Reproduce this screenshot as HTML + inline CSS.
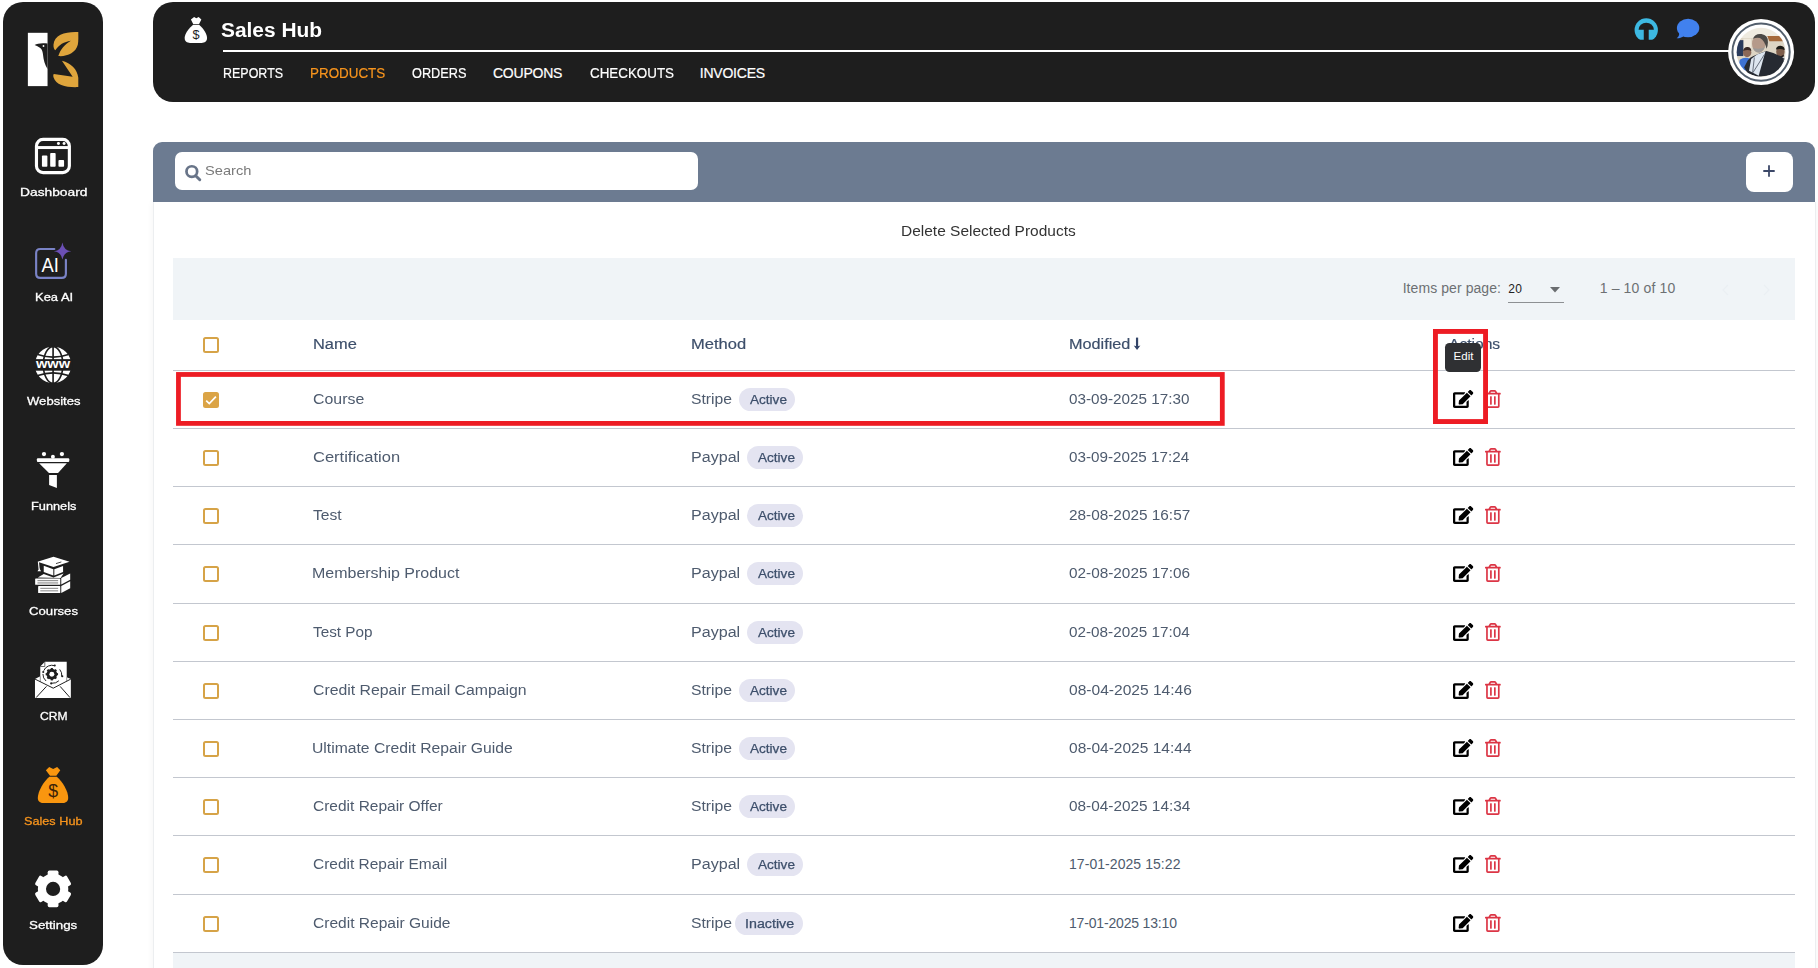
<!DOCTYPE html>
<html lang="en"><head><meta charset="utf-8"><title>Sales Hub - Products</title>
<style>
*{box-sizing:border-box;margin:0;padding:0}
html,body{width:1818px;height:968px;overflow:hidden;background:#fff;font-family:"Liberation Sans",sans-serif}
.abs{position:absolute}
.t{position:absolute;line-height:20px;white-space:nowrap;transform-origin:0 50%}
#side{position:absolute;left:3px;top:2px;width:100px;height:963px;background:#1e1e1e;border-radius:20px}
#head{position:absolute;left:153px;top:2px;width:1662px;height:99.7px;background:#1e1e1e;border-radius:20px}
#hline{position:absolute;left:223px;top:49.6px;width:1510px;height:2.4px;background:#fff}
#tool{position:absolute;left:153px;top:142px;width:1662px;height:60px;background:#6c7b91;border-radius:9px 9px 0 0}
#search{position:absolute;left:175px;top:151.6px;width:523px;height:38.4px;background:#fff;border-radius:7px}
#plus{position:absolute;left:1746px;top:152px;width:47.2px;height:40.2px;background:#fff;border-radius:8px}
#card{position:absolute;left:152.5px;top:202px;width:1663px;height:780px;border-left:1px solid #eceef0;border-right:1px solid #eceef0;background:#fff;box-shadow:0 0 7px rgba(0,0,0,0.05)}
#pag{position:absolute;left:173.2px;top:257.8px;width:1621.8px;height:61.8px;background:#f0f4f7}
#foot{position:absolute;left:173.2px;top:953px;width:1621.8px;height:20px;background:#f0f4f7}
.rl{position:absolute;left:173.2px;width:1621.8px;height:1px;background:#c3c7cf}
.cb{position:absolute;left:203px;width:16px;height:16px;border:2px solid #d6a347;border-radius:2.5px;background:#fff}
.cb.on{background:#dba446;border-color:#dba446}
.cb svg{position:absolute;left:-2px;top:-2px}
.bd{position:absolute;height:22.6px;border-radius:12px;background:#e4e4f1;color:#374151;font-size:12px;line-height:22.6px;text-align:center;white-space:nowrap;-webkit-text-stroke:0.25px #374151}
.ic{position:absolute;overflow:visible}
#tip{z-index:5;position:absolute;left:1445.2px;top:342.6px;width:35.6px;height:29.2px;background:#2f3033;border-radius:4.5px}
.sico{position:absolute;left:13px;width:80px;height:80px;overflow:visible}
</style></head><body>
<svg width="0" height="0" style="position:absolute"><defs>
<path id="i-edit" d="M402.6 83.2l90.200 90.200c3.800 3.800 3.800 10 0 13.800L274.400 405.600l-92.800 10.300c-12.400 1.400-22.900-9.100-21.500-21.500l10.300-92.800L388.800 83.200c3.800-3.800 10-3.800 13.800 0zm162-22.900l-48.800-48.800c-15.200-15.200-39.900-15.200-55.200 0l-35.400 35.400c-3.800 3.800-3.800 10 0 13.800l90.200 90.200c3.800 3.800 10 3.800 13.800 0l35.400-35.400c15.200-15.300 15.200-40 0-55.200zM384 346.200V448H64V128h229.800c3.200 0 6.200-1.300 8.500-3.500l40-40c7.600-7.600 2.200-20.500-8.500-20.500H48C21.500 64 0 85.500 0 112v352c0 26.500 21.500 48 48 48h352c26.500 0 48-21.500 48-48V306.200c0-10.700-12.900-16-20.500-8.500l-40 40c-2.200 2.300-3.500 5.300-3.500 8.500z" fill="#000"/>
<path id="i-trash" d="M268 416h24a12 12 0 0 0 12-12V188a12 12 0 0 0-12-12h-24a12 12 0 0 0-12 12v216a12 12 0 0 0 12 12zM432 80h-82.410l-34-56.700A48 48 0 0 0 274.410 0H173.590a48 48 0 0 0-41.160 23.300L98.410 80H16A16 16 0 0 0 0 96v16a16 16 0 0 0 16 16h16v336a48 48 0 0 0 48 48h288a48 48 0 0 0 48-48V128h16a16 16 0 0 0 16-16V96a16 16 0 0 0-16-16zM171.840 50.910A6 6 0 0 1 177 48h94a6 6 0 0 1 5.150 2.910L293.610 80H154.390zM368 464H80V128h288zm-212-48h24a12 12 0 0 0 12-12V188a12 12 0 0 0-12-12h-24a12 12 0 0 0-12 12v216a12 12 0 0 0 12 12z" fill="#dc3545"/>
</defs></svg>

<div id="side"></div>
<!-- logo -->
<svg class="sico" style="top:20px" viewBox="0 0 968 968">
  <rect x="180" y="155" width="238" height="645" fill="#fff"/>
  <path d="M262 303 C292 284 345 274 418 284 L418 592 C386 548 368 478 364 428 C361 386 352 356 330 338 C308 322 284 312 262 303 Z" fill="#1e1e1e"/>
  <circle cx="369" cy="315" r="11" fill="#fff"/>
  <path d="M790 145 C640 138 500 172 490 300 C488 335 498 356 512 366 C552 300 620 262 700 250 C625 298 575 352 548 436 C650 446 760 398 784 300 C794 250 790 200 790 145 Z" fill="#dfa53c"/>
  <path d="M790 812 C650 818 520 792 490 692 C485 672 487 662 494 654 L722 688 L592 494 C702 520 780 600 790 700 Z" fill="#dfa53c"/>
</svg>
<!-- dashboard -->
<svg class="sico" style="top:125px" viewBox="0 0 968 968">
  <rect x="284" y="174" width="398" height="402" rx="80" fill="none" stroke="#fff" stroke-width="38"/>
  <rect x="284" y="255" width="398" height="36" fill="#fff"/>
  <circle cx="550" cy="224" r="18" fill="#fff"/><circle cx="618" cy="224" r="18" fill="#fff"/>
  <rect x="350" y="370" width="66" height="136" rx="10" fill="#fff"/>
  <rect x="450" y="340" width="66" height="166" rx="10" fill="#fff"/>
  <rect x="550" y="425" width="68" height="81" rx="10" fill="#fff"/>
</svg>
<!-- kea ai -->
<svg class="sico" style="top:230px" viewBox="0 0 968 968">
  <path d="M500 230 H330 Q280 230 280 280 V530 Q280 580 330 580 H590 Q640 580 640 530 V360" fill="none" stroke="#7a83c6" stroke-width="26" stroke-linecap="round"/>
  <path d="M598 150 Q612 244 705 258 Q612 272 598 356 Q584 272 495 258 Q584 244 598 150 Z" fill="#6b4fb5"/>
  <text x="451" y="503" font-family="Liberation Sans, sans-serif" font-size="248" fill="#fff" text-anchor="middle" textLength="210" lengthAdjust="spacingAndGlyphs">AI</text>
</svg>
<!-- websites -->
<svg class="sico" style="top:335px" viewBox="0 0 968 968">
  <circle cx="485" cy="362" r="220" fill="#fff"/>
  <g fill="none" stroke="#1e1e1e" stroke-width="20">
    <line x1="485" y1="135" x2="485" y2="590"/>
    <ellipse cx="485" cy="362" rx="118" ry="222"/>
    <path d="M300 235 Q485 300 670 235"/>
    <path d="M300 490 Q485 425 670 490"/>
  </g>
  <rect x="255" y="292" width="460" height="140" fill="#1e1e1e"/>
  <text x="485" y="402" font-family="Liberation Sans, sans-serif" font-weight="700" font-size="158" fill="#fff" text-anchor="middle" textLength="414" lengthAdjust="spacingAndGlyphs">www</text>
</svg>
<!-- funnels -->
<svg class="sico" style="top:440px" viewBox="0 0 968 968">
  <circle cx="375" cy="170" r="26" fill="#fff"/><circle cx="483" cy="202" r="24" fill="#fff"/><circle cx="592" cy="170" r="26" fill="#fff"/>
  <rect x="289" y="222" width="392" height="44" rx="12" fill="#fff"/>
  <path d="M316 280 H652 L545 400 H435 Z" fill="#fff"/>
  <path d="M437 422 H531 V582 L437 546 Z" fill="#fff"/>
</svg>
<!-- courses -->
<svg class="sico" style="top:545px" viewBox="0 0 968 968">
  <path d="M296 203 L490 143 L684 203 L490 266 Z" fill="#fff"/>
  <path d="M372 252 L488 292 V368 L372 326 Z" fill="#fff"/>
  <path d="M500 292 L606 254 V326 L500 368 Z" fill="#fff"/>
  <path d="M520 225 L585 205" stroke="#1e1e1e" stroke-width="10"/>
  <path d="M308 205 L316 290" stroke="#fff" stroke-width="14"/>
  <path d="M318 280 L340 318 H296 Z" fill="#fff"/>
  <path d="M300 392 L372 352 L490 392 L612 345 L575 400 Z" fill="#fff"/>
  <rect x="268" y="404" width="304" height="78" rx="8" fill="#fff"/>
  <rect x="296" y="424" width="250" height="14" fill="#8f8f8f"/><rect x="296" y="452" width="250" height="14" fill="#8f8f8f"/>
  <path d="M584 400 L692 345 V420 L584 478 Z" fill="#fff"/>
  <rect x="304" y="496" width="268" height="86" rx="8" fill="#fff"/>
  <rect x="330" y="518" width="216" height="13" fill="#8f8f8f"/><rect x="330" y="548" width="216" height="13" fill="#8f8f8f"/>
  <path d="M584 496 L692 440 V522 L584 582 Z" fill="#fff"/>
</svg>
<!-- crm -->
<svg class="sico" style="top:650px" viewBox="0 0 968 968">
  <path d="M385 143 H650 V330 L700 352 V582 H266 V352 L330 318 V200 Z" fill="#fff"/>
  <path d="M330 200 H385 V143" fill="none" stroke="#1e1e1e" stroke-width="8"/>
  <path d="M266 352 L487 462 L700 352" fill="none" stroke="#1e1e1e" stroke-width="12"/>
  <path d="M280 576 L405 440 M690 576 L570 440" fill="none" stroke="#1e1e1e" stroke-width="12"/>
  <path d="M330 318 V385 M650 330 V378" fill="none" stroke="#1e1e1e" stroke-width="6"/>
  <circle cx="470" cy="293" r="48" fill="none" stroke="#1e1e1e" stroke-width="34"/>
  <g stroke="#1e1e1e" stroke-width="26" stroke-linecap="butt">
    <line x1="470" y1="218" x2="470" y2="368"/><line x1="395" y1="293" x2="545" y2="293"/>
    <line x1="417" y1="240" x2="523" y2="346"/><line x1="523" y1="240" x2="417" y2="346"/>
  </g>
  <circle cx="470" cy="293" r="30" fill="#fff"/>
  <path d="M372 250 A108 108 0 0 1 505 190 M565 235 A108 108 0 0 1 590 318 M555 372 A108 108 0 0 1 470 402 M400 375 A108 108 0 0 1 362 290" fill="none" stroke="#1e1e1e" stroke-width="12"/>
  <circle cx="505" cy="188" r="13" fill="#1e1e1e"/><circle cx="596" cy="318" r="13" fill="#1e1e1e"/><circle cx="462" cy="404" r="13" fill="#1e1e1e"/><circle cx="366" cy="266" r="13" fill="#1e1e1e"/>
</svg>
<!-- sales hub -->
<svg class="sico" style="top:755px" viewBox="0 0 968 968">
  <path d="M398 186 L438 146 L486 168 L534 146 L572 186 L524 252 H448 Z" fill="#f9960f"/>
  <path d="M440 262 H530 C600 320 670 440 668 520 C666 570 630 582 590 582 H380 C335 582 300 568 300 520 C300 440 370 320 440 262 Z" fill="#f9960f"/>
  <text x="485" y="505" font-family="Liberation Sans, sans-serif" font-size="215" fill="#3a2208" text-anchor="middle">$</text>
</svg>
<!-- settings -->
<svg class="sico" style="top:860px" viewBox="0 0 968 968">
  <g fill="#fff">
    <circle cx="485" cy="350" r="184"/>
    <g id="tooth"><rect x="420" y="128" width="130" height="90" rx="20"/></g>
    <use href="#tooth" transform="rotate(60 485 350)"/><use href="#tooth" transform="rotate(120 485 350)"/>
    <use href="#tooth" transform="rotate(180 485 350)"/><use href="#tooth" transform="rotate(240 485 350)"/><use href="#tooth" transform="rotate(300 485 350)"/>
  </g>
  <circle cx="485" cy="350" r="86" fill="#1e1e1e"/>
</svg>

<div id="head"></div>
<div id="hline"></div>
<!-- money bag header -->
<svg class="abs" style="left:150px;top:0" width="200" height="110" viewBox="0 0 1760 968">
  <path d="M360 172 L388 150 L408 160 L428 150 L452 172 L432 212 H380 Z" fill="#fff"/>
  <path d="M380 218 H432 C470 250 502 300 502 335 C502 366 480 378 455 378 H352 C326 378 305 366 305 335 C305 300 340 250 380 218 Z" fill="#fff"/>
  <text x="405" y="345" font-family="Liberation Sans, sans-serif" font-size="112" fill="#1e1e1e" text-anchor="middle">$</text>
</svg>
<!-- headphones + chat -->
<svg class="abs" style="left:1620px;top:8px" width="100" height="44" viewBox="0 0 1818 800">
  <defs><clipPath id="hpc"><rect x="200" y="150" width="560" height="428"/></clipPath></defs>
  <circle cx="477" cy="398" r="212" fill="#3db9e2" clip-path="url(#hpc)"/>
  <path d="M338 396 A139 128 0 0 1 616 396 Z" fill="#1e1e1e"/>
  <rect x="432" y="380" width="90" height="205" fill="#1e1e1e"/>
  <ellipse cx="1238" cy="362" rx="204" ry="168" fill="#4181ee"/>
  <path d="M1075 440 C1085 490 1060 530 1030 552 C1090 552 1140 530 1170 505 Z" fill="#4181ee"/>
</svg>
<!-- avatar -->
<svg class="abs" style="left:1726px;top:17px" width="70" height="70" viewBox="0 0 968 968">
  <defs><clipPath id="avc"><circle cx="485" cy="487" r="338"/></clipPath>
  <filter id="avb" x="-5%" y="-5%" width="110%" height="110%"><feGaussianBlur stdDeviation="9"/></filter></defs>
  <circle cx="485" cy="483" r="456" fill="#fff"/>
  <circle cx="485" cy="485" r="396" fill="none" stroke="#525e6c" stroke-width="27"/>
  <g clip-path="url(#avc)"><g filter="url(#avb)">
    <rect x="100" y="100" width="800" height="800" fill="#ddd5c4"/>
    <rect x="100" y="100" width="800" height="190" fill="#efebe0"/>
    <path d="M570 262 L790 262 L800 335 L600 335 Z" fill="#a66a3a"/>
    <rect x="240" y="300" width="110" height="140" fill="#efe9dc"/>
    <rect x="140" y="320" width="100" height="220" fill="#2b3a5c"/>
    <ellipse cx="292" cy="490" rx="58" ry="66" fill="#8b6858"/>
    <path d="M236 470 Q250 410 300 416 Q346 420 350 470 Q300 440 236 470Z" fill="#3a2c28"/>
    <path d="M170 720 L190 590 Q260 545 340 580 L350 760 Z" fill="#3c72d4"/>
    <ellipse cx="752" cy="482" rx="58" ry="70" fill="#7d5d4b"/>
    <path d="M690 450 Q700 395 755 398 Q812 402 812 460 Q760 430 690 450Z" fill="#1f1a18"/>
    <path d="M690 520 Q740 570 800 520 L800 560 Q750 590 690 550Z" fill="#2a211d"/>
    <path d="M640 800 L700 560 Q770 540 840 590 L860 800 Z" fill="#1f232b"/>
    <path d="M770 560 L800 545 L800 600 L775 610Z" fill="#e8ecf0"/>
    <ellipse cx="452" cy="372" rx="92" ry="118" fill="#b59a8a"/>
    <path d="M372 300 Q400 226 490 236 Q585 250 580 350 Q578 410 560 440 Q540 330 470 290 Q420 280 372 300Z" fill="#4b4845"/>
    <path d="M372 430 Q400 500 470 490 Q520 470 540 420 Q470 450 372 430Z" fill="#9c9a98"/>
    <path d="M250 700 L300 600 Q330 560 380 540 L470 500 L560 470 Q700 500 800 570 L790 780 L440 830 L300 780 Z" fill="#252932"/>
    <path d="M318 745 L348 580 L430 520 L545 478 L452 812 Z" fill="#dde6f0"/>
    <path d="M392 560 L368 770 M530 520 L372 770" stroke="#3a4252" stroke-width="10" fill="none"/>
  </g></g>
</svg>

<div id="card"></div>
<div id="tool"></div>
<div id="search"></div>
<div id="plus"></div>
<div id="pag"></div>
<div id="foot"></div>
<div class="rl" style="top:370.00px"></div>
<div class="cb on" style="top:391.90px"><svg viewBox="0 0 16 16" width="16" height="16"><path d="M3.2 8.6l3.1 3 6.6-7" fill="none" stroke="#fff" stroke-width="1.7"/></svg></div>
<div class="bd" style="left:739.10px;top:388.30px;width:56.40px"></div>
<svg class="ic" style="left:1453.2px;top:390.20px" width="20.25" height="18" viewBox="0 0 576 512"><use href="#i-edit"/></svg>
<svg class="ic" style="left:1485.4px;top:390.40px" width="15.75" height="18" viewBox="0 0 448 512"><use href="#i-trash"/></svg>
<div class="rl" style="top:428.00px"></div>
<div class="cb" style="top:449.90px"></div>
<div class="bd" style="left:747.10px;top:446.30px;width:56.40px"></div>
<svg class="ic" style="left:1453.2px;top:448.20px" width="20.25" height="18" viewBox="0 0 576 512"><use href="#i-edit"/></svg>
<svg class="ic" style="left:1485.4px;top:448.40px" width="15.75" height="18" viewBox="0 0 448 512"><use href="#i-trash"/></svg>
<div class="rl" style="top:486.00px"></div>
<div class="cb" style="top:507.90px"></div>
<div class="bd" style="left:747.10px;top:504.30px;width:56.40px"></div>
<svg class="ic" style="left:1453.2px;top:506.20px" width="20.25" height="18" viewBox="0 0 576 512"><use href="#i-edit"/></svg>
<svg class="ic" style="left:1485.4px;top:506.40px" width="15.75" height="18" viewBox="0 0 448 512"><use href="#i-trash"/></svg>
<div class="rl" style="top:544.00px"></div>
<div class="cb" style="top:565.90px"></div>
<div class="bd" style="left:747.10px;top:562.30px;width:56.40px"></div>
<svg class="ic" style="left:1453.2px;top:564.20px" width="20.25" height="18" viewBox="0 0 576 512"><use href="#i-edit"/></svg>
<svg class="ic" style="left:1485.4px;top:564.40px" width="15.75" height="18" viewBox="0 0 448 512"><use href="#i-trash"/></svg>
<div class="rl" style="top:603.00px"></div>
<div class="cb" style="top:624.90px"></div>
<div class="bd" style="left:747.10px;top:621.30px;width:56.40px"></div>
<svg class="ic" style="left:1453.2px;top:623.20px" width="20.25" height="18" viewBox="0 0 576 512"><use href="#i-edit"/></svg>
<svg class="ic" style="left:1485.4px;top:623.40px" width="15.75" height="18" viewBox="0 0 448 512"><use href="#i-trash"/></svg>
<div class="rl" style="top:661.00px"></div>
<div class="cb" style="top:682.90px"></div>
<div class="bd" style="left:739.10px;top:679.30px;width:56.40px"></div>
<svg class="ic" style="left:1453.2px;top:681.20px" width="20.25" height="18" viewBox="0 0 576 512"><use href="#i-edit"/></svg>
<svg class="ic" style="left:1485.4px;top:681.40px" width="15.75" height="18" viewBox="0 0 448 512"><use href="#i-trash"/></svg>
<div class="rl" style="top:719.00px"></div>
<div class="cb" style="top:740.90px"></div>
<div class="bd" style="left:739.10px;top:737.30px;width:56.40px"></div>
<svg class="ic" style="left:1453.2px;top:739.20px" width="20.25" height="18" viewBox="0 0 576 512"><use href="#i-edit"/></svg>
<svg class="ic" style="left:1485.4px;top:739.40px" width="15.75" height="18" viewBox="0 0 448 512"><use href="#i-trash"/></svg>
<div class="rl" style="top:777.00px"></div>
<div class="cb" style="top:798.90px"></div>
<div class="bd" style="left:739.10px;top:795.30px;width:56.40px"></div>
<svg class="ic" style="left:1453.2px;top:797.20px" width="20.25" height="18" viewBox="0 0 576 512"><use href="#i-edit"/></svg>
<svg class="ic" style="left:1485.4px;top:797.40px" width="15.75" height="18" viewBox="0 0 448 512"><use href="#i-trash"/></svg>
<div class="rl" style="top:835.00px"></div>
<div class="cb" style="top:856.90px"></div>
<div class="bd" style="left:747.10px;top:853.30px;width:56.40px"></div>
<svg class="ic" style="left:1453.2px;top:855.20px" width="20.25" height="18" viewBox="0 0 576 512"><use href="#i-edit"/></svg>
<svg class="ic" style="left:1485.4px;top:855.40px" width="15.75" height="18" viewBox="0 0 448 512"><use href="#i-trash"/></svg>
<div class="rl" style="top:894.00px"></div>
<div class="cb" style="top:915.90px"></div>
<div class="bd" style="left:735.30px;top:912.30px;width:67.60px"></div>
<svg class="ic" style="left:1453.2px;top:914.20px" width="20.25" height="18" viewBox="0 0 576 512"><use href="#i-edit"/></svg>
<svg class="ic" style="left:1485.4px;top:914.40px" width="15.75" height="18" viewBox="0 0 448 512"><use href="#i-trash"/></svg>
<div class="rl" style="top:952.00px"></div>
<div class="cb" style="top:337.2px"></div>
<!-- search icon -->
<svg class="abs" style="left:150px;top:130px" width="200" height="110" viewBox="0 0 1760 968">
  <circle cx="368" cy="366" r="47" fill="none" stroke="#687488" stroke-width="24"/>
  <path d="M402 402 L438 438" stroke="#687488" stroke-width="26" stroke-linecap="round"/>
</svg>
<!-- plus -->
<svg class="abs" style="left:1763.3px;top:165.1px" width="12" height="12" viewBox="0 0 12 12"><path d="M6 0.3V11.7M0.3 6H11.7" stroke="#3c4868" stroke-width="1.8"/></svg>
<!-- paginator select -->
<div class="abs" style="left:1507.7px;top:301.6px;width:56px;height:1px;background:#8d9093"></div>
<svg class="abs" style="left:1550px;top:286.6px" width="10" height="6" viewBox="0 0 10 6"><path d="M0 0H10L5 5.6Z" fill="#6a6d70"/></svg>
<svg class="abs" style="left:1716px;top:278px" width="70" height="24" viewBox="0 0 70 24"><path d="M12 7l-5 5 5 5M48 7l5 5-5 5" fill="none" stroke="#eaeff3" stroke-width="1.2"/></svg>
<!-- sort arrow -->
<svg class="abs" style="left:1133px;top:336px" width="9" height="15" viewBox="0 0 9 15"><path d="M4.05 1.6V11.5" stroke="#334468" stroke-width="2.2"/><path d="M0.7 9.6L4.05 13.9L7.4 9.6Q4.05 11 0.7 9.6Z" fill="#334468"/></svg>
<!-- red annotation boxes -->
<svg class="abs" style="left:0;top:0;pointer-events:none;z-index:4" width="1818" height="968" viewBox="0 0 1818 968">
  <rect x="178.46" y="374.47" width="1043.84" height="48.93" fill="none" stroke="#ed1c24" stroke-width="4.8"/>
  <rect x="1435.45" y="331.45" width="50.1" height="90.1" fill="none" stroke="#ed1c24" stroke-width="4.9"/>
</svg>
<div id="tip"></div>

<span id="t0" class="t" style="left:221.18px;top:19.97px;font-size:20px;font-weight:700;color:#fff;transform:scaleX(1.0450);">Sales Hub</span>
<span id="t1" class="t" style="left:222.96px;top:63.05px;font-size:14px;font-weight:400;color:#fff;transform:scaleX(0.8910);-webkit-text-stroke:0.2px currentColor;">REPORTS</span>
<span id="t2" class="t" style="left:309.69px;top:63.05px;font-size:14px;font-weight:400;color:#f7941d;transform:scaleX(0.9578);-webkit-text-stroke:0.2px currentColor;">PRODUCTS</span>
<span id="t3" class="t" style="left:411.73px;top:63.05px;font-size:14px;font-weight:400;color:#fff;transform:scaleX(0.9094);-webkit-text-stroke:0.2px currentColor;">ORDERS</span>
<span id="t4" class="t" style="left:492.92px;top:63.05px;font-size:14px;font-weight:400;color:#fff;letter-spacing:-0.213px;-webkit-text-stroke:0.2px currentColor;">COUPONS</span>
<span id="t5" class="t" style="left:589.64px;top:63.05px;font-size:14px;font-weight:400;color:#fff;transform:scaleX(0.9553);-webkit-text-stroke:0.2px currentColor;">CHECKOUTS</span>
<span id="t6" class="t" style="left:699.74px;top:63.05px;font-size:14px;font-weight:400;color:#fff;letter-spacing:-0.214px;-webkit-text-stroke:0.2px currentColor;">INVOICES</span>
<span id="t7" class="t" style="left:19.71px;top:182.02px;font-size:11.5px;font-weight:400;color:#fff;transform:scaleX(1.1993);-webkit-text-stroke:0.3px currentColor;">Dashboard</span>
<span id="t8" class="t" style="left:34.66px;top:287.02px;font-size:11.5px;font-weight:400;color:#fff;transform:scaleX(1.1254);-webkit-text-stroke:0.3px currentColor;">Kea AI</span>
<span id="t9" class="t" style="left:27.07px;top:390.72px;font-size:11.5px;font-weight:400;color:#fff;transform:scaleX(1.1372);-webkit-text-stroke:0.3px currentColor;">Websites</span>
<span id="t10" class="t" style="left:30.57px;top:495.72px;font-size:11.5px;font-weight:400;color:#fff;transform:scaleX(1.1106);-webkit-text-stroke:0.3px currentColor;">Funnels</span>
<span id="t11" class="t" style="left:28.77px;top:600.72px;font-size:11.5px;font-weight:400;color:#fff;transform:scaleX(1.1442);-webkit-text-stroke:0.3px currentColor;">Courses</span>
<span id="t12" class="t" style="left:40.00px;top:705.72px;font-size:11.5px;font-weight:400;color:#fff;transform:scaleX(1.0496);-webkit-text-stroke:0.3px currentColor;">CRM</span>
<span id="t13" class="t" style="left:24.22px;top:810.72px;font-size:11.5px;font-weight:400;color:#f7941d;transform:scaleX(1.1023);-webkit-text-stroke:0.3px currentColor;">Sales Hub</span>
<span id="t14" class="t" style="left:29.49px;top:914.52px;font-size:11.5px;font-weight:400;color:#fff;transform:scaleX(1.1609);-webkit-text-stroke:0.3px currentColor;">Settings</span>
<span id="t15" class="t" style="left:204.87px;top:161.10px;font-size:13px;font-weight:400;color:#7a7a7a;transform:scaleX(1.1247);">Search</span>
<span id="t16" class="t" style="left:900.79px;top:221.15px;font-size:14px;font-weight:400;color:#333;transform:scaleX(1.1058);">Delete Selected Products</span>
<span id="t17" class="t" style="left:1402.67px;top:277.75px;font-size:14px;font-weight:400;color:#6d7073;letter-spacing:0.074px;">Items per page:</span>
<span id="t18" class="t" style="left:1508.32px;top:279.04px;font-size:12px;font-weight:400;color:#222;letter-spacing:0.249px;">20</span>
<span id="t19" class="t" style="left:1599.68px;top:277.75px;font-size:14px;font-weight:400;color:#6d7073;letter-spacing:0.144px;">1 – 10 of 10</span>
<span id="t20" class="t" style="left:312.76px;top:334.15px;font-size:14px;font-weight:400;color:#3d4f6b;transform:scaleX(1.1722);-webkit-text-stroke:0.18px currentColor;">Name</span>
<span id="t21" class="t" style="left:690.65px;top:334.15px;font-size:14px;font-weight:400;color:#3d4f6b;transform:scaleX(1.1793);-webkit-text-stroke:0.18px currentColor;">Method</span>
<span id="t22" class="t" style="left:1068.77px;top:334.15px;font-size:14px;font-weight:400;color:#3d4f6b;transform:scaleX(1.1590);-webkit-text-stroke:0.18px currentColor;">Modified</span>
<span id="t23" class="t" style="left:1448.97px;top:334.15px;font-size:14px;font-weight:400;color:#3d4f6b;transform:scaleX(1.1144);-webkit-text-stroke:0.18px currentColor;">Actions</span>
<span id="t24" class="t" style="left:312.71px;top:389.15px;font-size:14px;font-weight:400;color:#4e5b6e;transform:scaleX(1.1350);">Course</span>
<span id="t25" class="t" style="left:690.67px;top:389.15px;font-size:14px;font-weight:400;color:#4e5b6e;transform:scaleX(1.1229);">Stripe</span>
<span id="t26" class="t" style="left:1069.43px;top:389.15px;font-size:14px;font-weight:400;color:#4e5b6e;transform:scaleX(1.0897);">03-09-2025 17:30</span>
<span id="t27" class="t" style="left:750.17px;top:389.84px;font-size:12px;font-weight:400;color:#3d4f6b;transform:scaleX(1.1309);-webkit-text-stroke:0.25px currentColor;">Active</span>
<span id="t28" class="t" style="left:312.68px;top:447.15px;font-size:14px;font-weight:400;color:#4e5b6e;transform:scaleX(1.1789);">Certification</span>
<span id="t29" class="t" style="left:690.64px;top:447.15px;font-size:14px;font-weight:400;color:#4e5b6e;transform:scaleX(1.1491);">Paypal</span>
<span id="t30" class="t" style="left:1069.43px;top:447.15px;font-size:14px;font-weight:400;color:#4e5b6e;transform:scaleX(1.0867);">03-09-2025 17:24</span>
<span id="t31" class="t" style="left:758.17px;top:447.84px;font-size:12px;font-weight:400;color:#3d4f6b;transform:scaleX(1.1309);-webkit-text-stroke:0.25px currentColor;">Active</span>
<span id="t32" class="t" style="left:313.24px;top:505.15px;font-size:14px;font-weight:400;color:#4e5b6e;transform:scaleX(1.1176);">Test</span>
<span id="t33" class="t" style="left:690.64px;top:505.15px;font-size:14px;font-weight:400;color:#4e5b6e;transform:scaleX(1.1491);">Paypal</span>
<span id="t34" class="t" style="left:1069.28px;top:505.15px;font-size:14px;font-weight:400;color:#4e5b6e;transform:scaleX(1.0965);">28-08-2025 16:57</span>
<span id="t35" class="t" style="left:758.17px;top:505.84px;font-size:12px;font-weight:400;color:#3d4f6b;transform:scaleX(1.1309);-webkit-text-stroke:0.25px currentColor;">Active</span>
<span id="t36" class="t" style="left:312.25px;top:563.15px;font-size:14px;font-weight:400;color:#4e5b6e;transform:scaleX(1.1415);">Membership Product</span>
<span id="t37" class="t" style="left:690.64px;top:563.15px;font-size:14px;font-weight:400;color:#4e5b6e;transform:scaleX(1.1491);">Paypal</span>
<span id="t38" class="t" style="left:1069.43px;top:563.15px;font-size:14px;font-weight:400;color:#4e5b6e;transform:scaleX(1.0955);">02-08-2025 17:06</span>
<span id="t39" class="t" style="left:758.17px;top:563.84px;font-size:12px;font-weight:400;color:#3d4f6b;transform:scaleX(1.1309);-webkit-text-stroke:0.25px currentColor;">Active</span>
<span id="t40" class="t" style="left:313.25px;top:622.15px;font-size:14px;font-weight:400;color:#4e5b6e;transform:scaleX(1.0917);">Test Pop</span>
<span id="t41" class="t" style="left:690.64px;top:622.15px;font-size:14px;font-weight:400;color:#4e5b6e;transform:scaleX(1.1491);">Paypal</span>
<span id="t42" class="t" style="left:1069.43px;top:622.15px;font-size:14px;font-weight:400;color:#4e5b6e;transform:scaleX(1.0921);">02-08-2025 17:04</span>
<span id="t43" class="t" style="left:758.17px;top:622.84px;font-size:12px;font-weight:400;color:#3d4f6b;transform:scaleX(1.1309);-webkit-text-stroke:0.25px currentColor;">Active</span>
<span id="t44" class="t" style="left:312.72px;top:680.15px;font-size:14px;font-weight:400;color:#4e5b6e;transform:scaleX(1.1300);">Credit Repair Email Campaign</span>
<span id="t45" class="t" style="left:690.67px;top:680.15px;font-size:14px;font-weight:400;color:#4e5b6e;transform:scaleX(1.1229);">Stripe</span>
<span id="t46" class="t" style="left:1069.42px;top:680.15px;font-size:14px;font-weight:400;color:#4e5b6e;transform:scaleX(1.1119);">08-04-2025 14:46</span>
<span id="t47" class="t" style="left:750.17px;top:680.84px;font-size:12px;font-weight:400;color:#3d4f6b;transform:scaleX(1.1309);-webkit-text-stroke:0.25px currentColor;">Active</span>
<span id="t48" class="t" style="left:312.32px;top:738.15px;font-size:14px;font-weight:400;color:#4e5b6e;transform:scaleX(1.1210);">Ultimate Credit Repair Guide</span>
<span id="t49" class="t" style="left:690.67px;top:738.15px;font-size:14px;font-weight:400;color:#4e5b6e;transform:scaleX(1.1229);">Stripe</span>
<span id="t50" class="t" style="left:1069.42px;top:738.15px;font-size:14px;font-weight:400;color:#4e5b6e;transform:scaleX(1.1085);">08-04-2025 14:44</span>
<span id="t51" class="t" style="left:750.17px;top:738.84px;font-size:12px;font-weight:400;color:#3d4f6b;transform:scaleX(1.1309);-webkit-text-stroke:0.25px currentColor;">Active</span>
<span id="t52" class="t" style="left:312.73px;top:796.15px;font-size:14px;font-weight:400;color:#4e5b6e;transform:scaleX(1.1066);">Credit Repair Offer</span>
<span id="t53" class="t" style="left:690.67px;top:796.15px;font-size:14px;font-weight:400;color:#4e5b6e;transform:scaleX(1.1229);">Stripe</span>
<span id="t54" class="t" style="left:1069.43px;top:796.15px;font-size:14px;font-weight:400;color:#4e5b6e;transform:scaleX(1.0976);">08-04-2025 14:34</span>
<span id="t55" class="t" style="left:750.17px;top:796.84px;font-size:12px;font-weight:400;color:#3d4f6b;transform:scaleX(1.1309);-webkit-text-stroke:0.25px currentColor;">Active</span>
<span id="t56" class="t" style="left:312.73px;top:854.15px;font-size:14px;font-weight:400;color:#4e5b6e;transform:scaleX(1.1050);">Credit Repair Email</span>
<span id="t57" class="t" style="left:690.64px;top:854.15px;font-size:14px;font-weight:400;color:#4e5b6e;transform:scaleX(1.1491);">Paypal</span>
<span id="t58" class="t" style="left:1068.98px;top:854.15px;font-size:14px;font-weight:400;color:#4e5b6e;letter-spacing:0.061px;">17-01-2025 15:22</span>
<span id="t59" class="t" style="left:758.17px;top:854.84px;font-size:12px;font-weight:400;color:#3d4f6b;transform:scaleX(1.1309);-webkit-text-stroke:0.25px currentColor;">Active</span>
<span id="t60" class="t" style="left:312.73px;top:913.15px;font-size:14px;font-weight:400;color:#4e5b6e;transform:scaleX(1.1108);">Credit Repair Guide</span>
<span id="t61" class="t" style="left:690.67px;top:913.15px;font-size:14px;font-weight:400;color:#4e5b6e;transform:scaleX(1.1229);">Stripe</span>
<span id="t62" class="t" style="left:1068.98px;top:913.15px;font-size:14px;font-weight:400;color:#4e5b6e;letter-spacing:-0.172px;">17-01-2025 13:10</span>
<span id="t63" class="t" style="left:744.91px;top:913.84px;font-size:12px;font-weight:400;color:#3d4f6b;transform:scaleX(1.1875);-webkit-text-stroke:0.25px currentColor;">Inactive</span>
<span id="t64" class="t" style="left:1453.40px;top:346.32px;font-size:11.5px;font-weight:400;color:#fff;letter-spacing:0.098px;z-index:6;">Edit</span>
</body></html>
